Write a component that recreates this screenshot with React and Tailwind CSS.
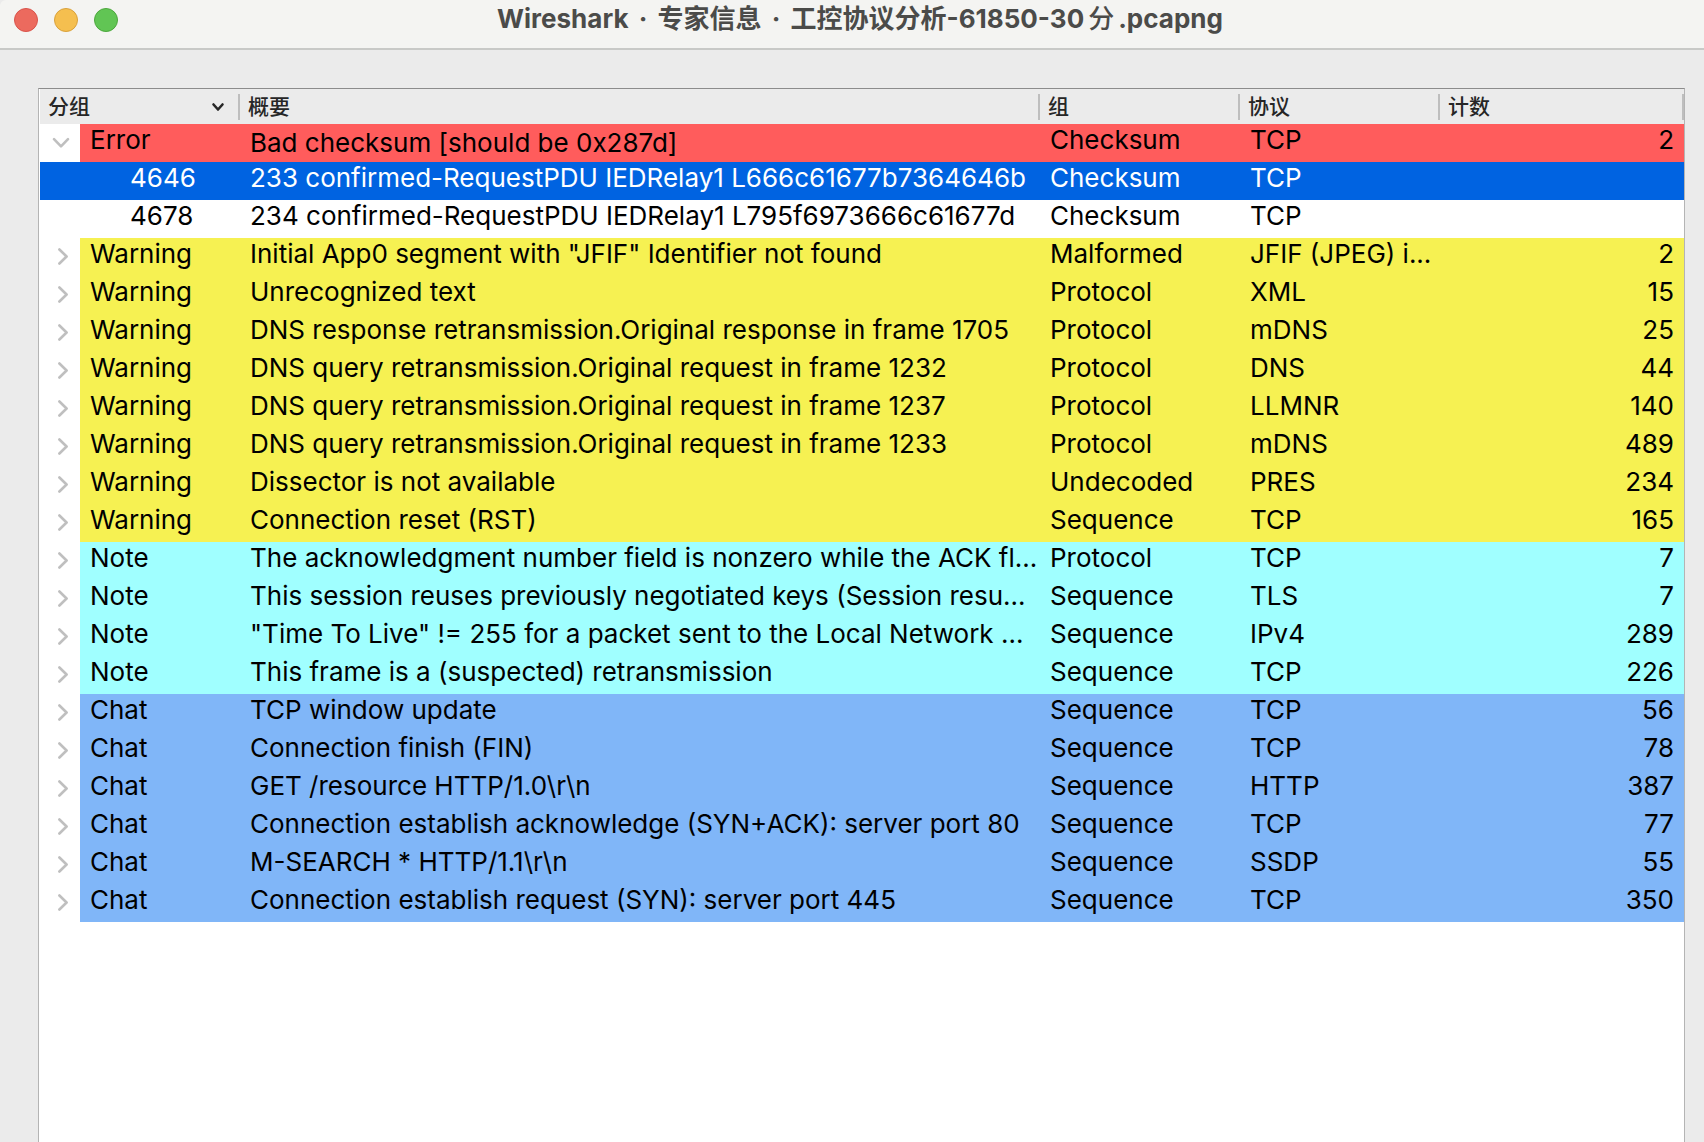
import clsx from 'clsx';

const COLORS = {
  Error: 'bg-[#ff5c5c]',
  Warning: 'bg-[#f6f152]',
  Note: 'bg-[#a0ffff]',
  Chat: 'bg-[#80b6f8]',
};

const ROWS = [
  {
    severity: 'Error',
    summary: 'Bad checksum [should be 0x287d]',
    group: 'Checksum',
    protocol: 'TCP',
    count: 2,
    packets: [
      {
        number: 4646,
        summary: '233 confirmed-RequestPDU IEDRelay1 L666c61677b7364646b',
        group: 'Checksum',
        protocol: 'TCP',
        selected: true,
      },
      {
        number: 4678,
        summary: '234 confirmed-RequestPDU IEDRelay1 L795f6973666c61677d',
        group: 'Checksum',
        protocol: 'TCP',
      },
    ],
  },
  { severity: 'Warning', summary: 'Initial App0 segment with "JFIF" Identifier not found', group: 'Malformed', protocol: 'JFIF (JPEG) i...', count: 2 },
  { severity: 'Warning', summary: 'Unrecognized text', group: 'Protocol', protocol: 'XML', count: 15 },
  { severity: 'Warning', summary: 'DNS response retransmission.Original response in frame 1705', group: 'Protocol', protocol: 'mDNS', count: 25 },
  { severity: 'Warning', summary: 'DNS query retransmission.Original request in frame 1232', group: 'Protocol', protocol: 'DNS', count: 44 },
  { severity: 'Warning', summary: 'DNS query retransmission.Original request in frame 1237', group: 'Protocol', protocol: 'LLMNR', count: 140 },
  { severity: 'Warning', summary: 'DNS query retransmission.Original request in frame 1233', group: 'Protocol', protocol: 'mDNS', count: 489 },
  { severity: 'Warning', summary: 'Dissector is not available', group: 'Undecoded', protocol: 'PRES', count: 234 },
  { severity: 'Warning', summary: 'Connection reset (RST)', group: 'Sequence', protocol: 'TCP', count: 165 },
  { severity: 'Note', summary: 'The acknowledgment number field is nonzero while the ACK fl...', group: 'Protocol', protocol: 'TCP', count: 7 },
  { severity: 'Note', summary: 'This session reuses previously negotiated keys (Session resu...', group: 'Sequence', protocol: 'TLS', count: 7 },
  { severity: 'Note', summary: '"Time To Live" != 255 for a packet sent to the Local Network ...', group: 'Sequence', protocol: 'IPv4', count: 289 },
  { severity: 'Note', summary: 'This frame is a (suspected) retransmission', group: 'Sequence', protocol: 'TCP', count: 226 },
  { severity: 'Chat', summary: 'TCP window update', group: 'Sequence', protocol: 'TCP', count: 56 },
  { severity: 'Chat', summary: 'Connection finish (FIN)', group: 'Sequence', protocol: 'TCP', count: 78 },
  { severity: 'Chat', summary: 'GET /resource HTTP/1.0\\r\\n', group: 'Sequence', protocol: 'HTTP', count: 387 },
  { severity: 'Chat', summary: 'Connection establish acknowledge (SYN+ACK): server port 80', group: 'Sequence', protocol: 'TCP', count: 77 },
  { severity: 'Chat', summary: 'M-SEARCH * HTTP/1.1\\r\\n', group: 'Sequence', protocol: 'SSDP', count: 55 },
  { severity: 'Chat', summary: 'Connection establish request (SYN): server port 445', group: 'Sequence', protocol: 'TCP', count: 350 },
];

const TitleBar = () => (
  <header className="relative flex h-[50px] items-start rounded-tl-md border-b-2 border-[#c8c9c7] bg-[#f4f4f2]">
    <div className="absolute left-[14px] top-2 flex gap-4">
      <button aria-label="Close" className="size-6 rounded-full border border-[#d9534b] bg-[#ec6a5e]" />
      <button aria-label="Minimize" className="size-6 rounded-full border border-[#d9a13c] bg-[#f5bf4f]" />
      <button aria-label="Zoom" className="size-6 rounded-full border border-[#4ca73d] bg-[#61c554]" />
    </div>
    <h1 className="flex-1 whitespace-nowrap pl-4 text-center text-[26px] font-bold leading-[38px] text-[#4b4b49]">
      Wireshark <span className="mx-1">·</span> 专家信息 <span className="mx-1">·</span>{' '}
      工控协议分析-61850-30<span className="mx-1 font-medium">分</span>.pcapng
    </h1>
  </header>
);

const HeaderCell = ({ children }) => (
  <th className="h-[35px] p-0 text-left font-medium">
    <div className="flex h-[26px] items-center border-r-2 border-[#bebebe] pl-2">
      {children}
    </div>
  </th>
);

const Expander = ({ open }) => (
  <button
    aria-label={open ? 'Collapse' : 'Expand'}
    className="flex h-[38px] w-10 items-center justify-center bg-white pl-1.5"
  >
    {open ? (
      <svg width="18" height="12" viewBox="0 0 18 12" fill="none" className="mr-1" stroke="#bfbfbf" strokeWidth="2.6" strokeLinecap="round" strokeLinejoin="round">
        <path d="M2 2.200 9 9.400l7-7.200" />
      </svg>
    ) : (
      <svg width="12" height="18" viewBox="0 0 12 18" fill="none" stroke="#bfbfbf" strokeWidth="2.6" strokeLinecap="round" strokeLinejoin="round">
        <path d="M2.400 1.500 9.600 8.500l-7.200 7" />
      </svg>
    )}
  </button>
);

const Cell = ({ children, className }) => (
  <td className={clsx('h-[38px] whitespace-nowrap p-0 pl-[10px] align-top', className)}>
    {children}
  </td>
);

const SeverityRow = ({ row }) => (
  <tr className={COLORS[row.severity]}>
    <td className="h-[38px] p-0 align-top">
      <div className="flex">
        <Expander open={Boolean(row.packets)} />
        <span className="pl-[10px]">{row.severity}</span>
      </div>
    </td>
    <Cell className={row.packets && 'leading-[38px]'}>{row.summary}</Cell>
    <Cell>{row.group}</Cell>
    <Cell>{row.protocol}</Cell>
    <Cell className="pr-[10px] text-right">{row.count}</Cell>
  </tr>
);

const PacketRow = ({ packet }) => (
  <tr className={clsx(packet.selected && 'bg-[#0063e1] text-white')}>
    <Cell className="pl-[90px]">{packet.number}</Cell>
    <Cell>{packet.summary}</Cell>
    <Cell>{packet.group}</Cell>
    <Cell>{packet.protocol}</Cell>
    <Cell />
  </tr>
);

const App = () => {
  return (
    <div className="flex min-h-screen flex-col bg-[#ebebeb] font-['Inter','Noto_Sans_CJK_SC',sans-serif]">
      <TitleBar />

      <main className="ml-[38px] mr-[19px] mt-[38px] flex-1 border-x border-t border-x-[#b4b4b4] border-t-[#8c8c8c] bg-white pl-px">
        <table className="w-full table-fixed border-collapse text-[26px] leading-8 text-black">
          <colgroup>
            <col className="w-[200px]" />
            <col className="w-[800px]" />
            <col className="w-[200px]" />
            <col className="w-[200px]" />
            <col />
          </colgroup>
          <thead className="bg-[#ebebeb] text-[21px] leading-[26px] text-[#262626]">
            <tr>
              <HeaderCell>
                <button className="flex flex-1 items-center justify-between pr-[13px]">
                  分组
                  <svg width="14" height="10" viewBox="0 0 14 10" fill="none" stroke="#262626" strokeWidth="2.6" strokeLinecap="round" strokeLinejoin="round">
                    <path d="M2.500 2.500 7 7.500l4.500-5" />
                  </svg>
                </button>
              </HeaderCell>
              <HeaderCell>概要</HeaderCell>
              <HeaderCell>组</HeaderCell>
              <HeaderCell>协议</HeaderCell>
              <HeaderCell>计数</HeaderCell>
            </tr>
          </thead>
          <tbody>
            {ROWS.map((row) => [
              <SeverityRow key={row.summary} row={row} />,
              ...(row.packets || []).map((packet) => (
                <PacketRow key={packet.number} packet={packet} />
              )),
            ])}
          </tbody>
        </table>
      </main>
    </div>
  );
};

export default App;
